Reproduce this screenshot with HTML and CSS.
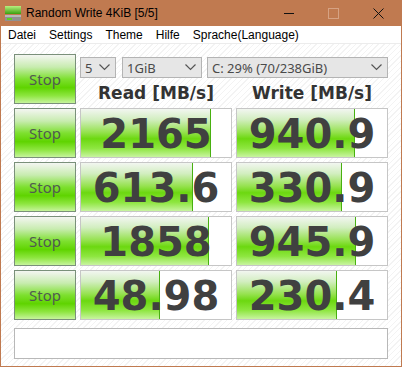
FILE: index.html
```html
<!DOCTYPE html>
<html>
<head>
 <meta charset="utf-8"/>
 <title>Random Write 4KiB [5/5]</title>
<link rel="stylesheet" href="styles.css">
</head>
<body>
<div class="window">
 <div class="titlebar">
  <svg class="appicon" width="18" height="17" viewBox="0 0 18 17">
   <defs>
    <linearGradient id="g1" x1="0" y1="0" x2="0" y2="1">
     <stop offset="0" stop-color="#b8f080"/>
     <stop offset="1" stop-color="#3aa010"/>
    </linearGradient>
   </defs>
   <rect x="1" y="1" width="16" height="8" fill="url(#g1)"/>
   <rect x="1" y="10" width="16" height="6" fill="#909090"/>
   <rect x="1" y="10" width="16" height="2" fill="#b8b8b8"/>
   <rect x="3" y="13" width="5" height="2" fill="#5ad020"/>
  </svg>
  <span class="title">Random Write 4KiB [5/5]</span>
  <div class="winbtns">
   <span class="wb"><span class="minline"></span></span>
   <span class="wb"><span class="maxbox"></span></span>
   <span class="wb">
    <svg width="11" height="11" viewBox="0 0 11 11"><path d="M0.5 0.5 L10.5 10.5 M10.5 0.5 L0.5 10.5" stroke="#111" stroke-width="1"/></svg>
   </span>
  </div>
 </div>
 <div class="menubar">
  <span>Datei</span><span>Settings</span><span>Theme</span><span>Hilfe</span><span>Sprache(Language)</span>
 </div>
 <div class="content">
  <div class="grid">
   <div class="stop">Stop</div>
   <div class="topright">
    <div class="selects">
     <div class="sel s1"><span>5</span><svg width="11" height="7" viewBox="0 0 11 7"><path d="M0.5 0.5 L5.5 5.5 L10.5 0.5" fill="none" stroke="#555" stroke-width="1.2"/></svg></div>
     <div class="sel s2"><span>1GiB</span><svg width="11" height="7" viewBox="0 0 11 7"><path d="M0.5 0.5 L5.5 5.5 L10.5 0.5" fill="none" stroke="#555" stroke-width="1.2"/></svg></div>
     <div class="sel s3"><span>C: 29% (70/238GiB)</span><svg width="11" height="7" viewBox="0 0 11 7"><path d="M0.5 0.5 L5.5 5.5 L10.5 0.5" fill="none" stroke="#555" stroke-width="1.2"/></svg></div>
    </div>
    <div class="heads">
     <div class="head">Read [MB/s]</div>
     <div class="head">Write [MB/s]</div>
    </div>
   </div>

   <div class="stop">Stop</div>
   <div class="result"><div class="fill" style="width:130px"></div><span class="num">2165</span></div>
   <div class="result"><div class="fill" style="width:118px"></div><span class="num">940.9</span></div>

   <div class="stop">Stop</div>
   <div class="result"><div class="fill" style="width:112px"></div><span class="num">613.6</span></div>
   <div class="result"><div class="fill" style="width:105px"></div><span class="num">330.9</span></div>

   <div class="stop">Stop</div>
   <div class="result"><div class="fill" style="width:128px"></div><span class="num">1858</span></div>
   <div class="result"><div class="fill" style="width:119px"></div><span class="num">945.9</span></div>

   <div class="stop">Stop</div>
   <div class="result"><div class="fill" style="width:79px"></div><span class="num">48.98</span></div>
   <div class="result"><div class="fill" style="width:100px"></div><span class="num">230.4</span></div>
  </div>
  <div class="comment"></div>
 </div>
</div>
</body>
</html>
```
FILE: styles.css
```css
html, body {
 margin: 0;
 padding: 0;
 background: #ffffff;
}

.window {
 width: 400px;
 height: 366px;
 border: 1px solid #c07a50;
 border-top: none;
 display: flex;
 flex-direction: column;
 font-family: "Noto Sans", "DejaVu Sans", sans-serif;
 overflow: hidden;
}

/* title bar */
.titlebar {
 height: 26px;
 background: #c07a50;
 display: flex;
 align-items: center;
 flex-shrink: 0;
}
.appicon {
 margin-left: 3px;
 margin-right: 4px;
}
.title {
 font-family: "Liberation Sans", Arial, sans-serif;
 font-size: 12px;
 color: #000;
}
.winbtns {
 margin-left: auto;
 display: flex;
 height: 26px;
}
.wb {
 width: 45px;
 display: flex;
 align-items: center;
 justify-content: center;
}
.minline {
 width: 10px;
 height: 1px;
 background: #111;
}
.maxbox {
 width: 9px;
 height: 9px;
 border: 1px solid #d6a283;
}

/* menu */
.menubar {
 height: 17px;
 background: #ffffff;
 border-bottom: 1px solid #ececec;
 display: flex;
 align-items: center;
 gap: 13px;
 padding-left: 7px;
 font-family: "Liberation Sans", Arial, sans-serif;
 font-size: 12px;
 color: #000;
 flex-shrink: 0;
}

/* main area */
.content {
 flex: 1;
 background: repeating-linear-gradient(-45deg, #ffffff 0px, #ffffff 3px, #f3f3f3 3px, #f3f3f3 4px);
 padding: 10px 0 0 13px;
}
.grid {
 display: grid;
 grid-template-columns: 62px 152px 152px;
 grid-auto-rows: 50px;
 gap: 4px;
}

.stop {
 box-sizing: border-box;
 border: 1px solid #7a907a;
 background: linear-gradient(#f4f6f2 0%, #c8ecb0 25%, #7ee030 50%, #5fd400 68%, #8ee640 85%, #c6f49c 100%);
 display: flex;
 align-items: center;
 justify-content: center;
 font-size: 15px;
 color: #505a50;
}

.topright {
 grid-column: 2 / 4;
 display: flex;
 flex-direction: column;
}
.selects {
 display: flex;
 margin-top: 3px;
 height: 21px;
}
.sel {
 box-sizing: border-box;
 height: 21px;
 background: #e6e6e6;
 border: 1px solid #b4b4b4;
 display: flex;
 align-items: center;
 justify-content: space-between;
 padding: 0 5px 0 4px;
 font-size: 13px;
 color: #4a4a4a;
}
.s1 { width: 36px; }
.s2 { width: 80px; margin-left: 6px; }
.s3 { width: 181px; margin-left: 5px; }

.heads {
 display: flex;
 gap: 4px;
 margin-top: 5px;
}
.head {
 width: 152px;
 text-align: center;
 font-family: "DejaVu Sans", sans-serif;
 font-weight: bold;
 font-size: 17px;
 color: #333;
}

.result {
 position: relative;
 box-sizing: border-box;
 border: 1px solid #c6c6c6;
 background: #ffffff;
 display: flex;
 align-items: center;
 justify-content: center;
}
.fill {
 position: absolute;
 left: 0;
 top: 0;
 bottom: 0;
 box-sizing: border-box;
 border-right: 1px solid #48b010;
 background: linear-gradient(#f2f6f0 0%, #d2eec0 22%, #96e250 48%, #6cd810 62%, #8ee640 82%, #c8f4a0 100%);
}
.num {
 position: relative;
 font-family: "DejaVu Sans", sans-serif;
 font-weight: bold;
 font-size: 40px;
 color: #404040;
 line-height: 1;
 margin-top: 2px;
}

.comment {
 box-sizing: border-box;
 width: 374px;
 height: 31px;
 margin-top: 8px;
 background: #ffffff;
 border: 1px solid #b8b8b8;
}
```
